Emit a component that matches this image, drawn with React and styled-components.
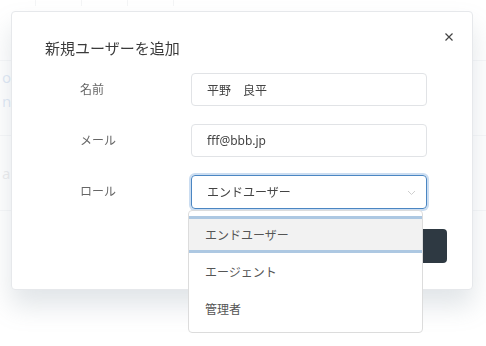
import React from 'react'
import styled, { createGlobalStyle } from 'styled-components'

const GlobalStyle = createGlobalStyle`
  html, body {
    margin: 0;
    padding: 0;
    background: #ffffff;
    font-family: "Noto Sans", "Noto Sans CJK JP", sans-serif;
    color: #333;
  }
`

const roles = ['エンドユーザー', 'エージェント', '管理者']

function App() {
  return (
    <>
      <GlobalStyle />
      <Page>
        <HeaderCells>
          <i /><i /><i /><i />
        </HeaderCells>
        <TableRow top>
          <Cell>oC<br />n.jp</Cell>
        </TableRow>
        <TableRow>
          <Cell muted>apl</Cell>
        </TableRow>
      </Page>
      <Overlay>
        <Modal>
          <ModalHeader>
            <Title>新規ユーザーを追加</Title>
            <Close width="8" height="8" viewBox="0 0 8 8" aria-label="閉じる">
              <path d="M0.5 0.5l7 7M7.5 0.5l-7 7" stroke="#444" strokeWidth="1.2" />
            </Close>
          </ModalHeader>
          <Form>
            <Label>名前</Label>
            <Input>平野　良平</Input>
            <Label>メール</Label>
            <Input>fff@bbb.jp</Input>
            <Label>ロール</Label>
            <SelectWrap>
              <Input focused>
                エンドユーザー
                <Chevron width="9" height="6" viewBox="0 0 9 6">
                  <path d="M1 1l3.5 3.5L8 1" fill="none" stroke="#cfcfcf" strokeWidth="1" />
                </Chevron>
              </Input>
              <Menu>
                {roles.map((r, i) => (
                  <Option key={r} active={i === 0}>{r}</Option>
                ))}
              </Menu>
            </SelectWrap>
          </Form>
          <Footer>
            <SubmitButton>追加</SubmitButton>
          </Footer>
        </Modal>
      </Overlay>
    </>
  )
}

export default App

const Page = styled.div`
  width: 486px;
  height: 346px;
  overflow: hidden;
  display: flex;
  flex-direction: column;
`
const HeaderCells = styled.div`
  height: 60px;
  border-bottom: 1px solid #c9ced6;
  display: flex;
  gap: 45px;
  padding-left: 35px;

  i {
    width: 1px;
    height: 6px;
    background: #b8bec8;
  }
`
const TableRow = styled.div`
  box-sizing: border-box;
  height: 75px;
  border-bottom: 1px solid #c9ced6;
  display: flex;
  align-items: ${p => (p.top ? 'flex-start' : 'center')};
  padding-top: ${p => (p.top ? '4px' : '0')};
`
const Cell = styled.div`
  padding-left: 2px;
  font-size: 15px;
  line-height: 24px;
  color: ${p => (p.muted ? '#8a8f96' : '#3f78c0')};
`
const Overlay = styled.div`
  position: fixed;
  inset: 0;
  background: rgba(255, 255, 255, 0.84);
`
const Modal = styled.div`
  position: absolute;
  left: 11px;
  top: 11px;
  width: 462px;
  height: 279px;
  box-sizing: border-box;
  background: #fff;
  border: 1px solid #e6e8eb;
  border-radius: 4px;
  box-shadow: 0 16px 26px rgba(120, 135, 150, 0.22);
  display: flex;
  flex-direction: column;
`
const ModalHeader = styled.div`
  display: flex;
  justify-content: space-between;
  align-items: flex-start;
  padding: 25px 19px 0 33px;
`
const Title = styled.div`
  font-size: 15px;
  line-height: 22px;
  color: #3a3a3a;
`
const Close = styled.svg`
  display: block;
  margin-top: -4px;
`
const Form = styled.div`
  display: grid;
  grid-template-columns: 111px 236px;
  row-gap: 18px;
  align-items: center;
  padding: 14px 0 0 68px;
`
const Label = styled.div`
  font-size: 12px;
  color: #666;
  margin-top: -2px;
`
const Input = styled.div`
  position: relative;
  box-sizing: border-box;
  height: ${p => (p.focused ? '34px' : '33px')};
  border: 1px solid ${p => (p.focused ? '#4b86c2' : '#e1e3e6')};
  border-radius: 4px;
  box-shadow: ${p => (p.focused ? '0 0 0 2px rgba(140, 180, 225, 0.45)' : 'none')};
  padding: 0 15px;
  display: flex;
  align-items: center;
  font-size: 12px;
  color: #444;
`
const Chevron = styled.svg`
  position: absolute;
  right: 10px;
  top: 14px;
`
const SelectWrap = styled.div`
  position: relative;
`
const Menu = styled.div`
  position: absolute;
  left: -3px;
  top: 35px;
  width: 235px;
  height: 123px;
  box-sizing: border-box;
  background: #fff;
  border: 1px solid #dcdcdc;
  border-radius: 4px;
  padding-top: 5px;
  z-index: 2;
`
const Option = styled.div`
  box-sizing: border-box;
  height: 37px;
  display: flex;
  align-items: center;
  padding-left: 16px;
  font-size: 12px;
  color: #555;
  background: ${p => (p.active ? '#f2f2f2' : 'transparent')};
  border-top: ${p => (p.active ? '3px solid #adc8e2' : '0')};
  border-bottom: ${p => (p.active ? '3px solid #adc8e2' : '0')};
`
const Footer = styled.div`
  margin-top: auto;
  display: flex;
  justify-content: flex-end;
  padding: 0 25px 26px;
`
const SubmitButton = styled.div`
  width: 70px;
  height: 34px;
  border-radius: 4px;
  background: #2e3942;
  color: #fff;
  font-size: 12px;
  display: flex;
  align-items: center;
  justify-content: center;
`
